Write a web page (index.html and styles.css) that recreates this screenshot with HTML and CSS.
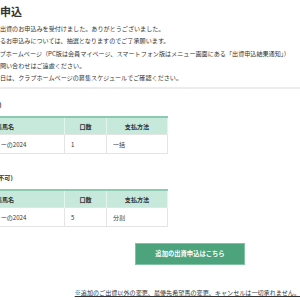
FILE: index.html
```html
<!DOCTYPE html>
<html lang="ja">

<head>
    <meta charset="UTF-8">
    <meta name="viewport" content="width=device-width, initial-scale=1.0">
    <title>出資申込</title>
    <link rel="stylesheet" href="styles.css">
</head>

<body>
    <div class="page">
        <h1 class="title">出資申込</h1>

        <div class="message">
            <p>このたびは、追加のご出資のお申込みを受付けました。ありがとうございました。</p>
            <p>今回の追加出資に対するお申込みについては、抽選となりますのでご了承願います。</p>
            <p>結果については、クラブホームページ（PC版は会員マイページ、スマートフォン版はメニュー画面にある「出資申込結果通知」）</p>
            <p>なお、抽選結果へのお問い合わせはご遠慮ください。</p>
            <p>※抽選結果通知の掲載日は、クラブホームページの募集スケジュールでご確認ください。</p>
        </div>

        <hr class="divider">

        <h2 class="label">最優先希望馬(抽選対象)</h2>
        <table class="apply-table">
            <thead>
                <tr>
                    <th class="col-name">募集馬名</th>
                    <th class="col-count">口数</th>
                    <th class="col-pay">支払方法</th>
                </tr>
            </thead>
            <tbody>
                <tr>
                    <td>サンシャインメモリーの2024</td>
                    <td>1</td>
                    <td>一括</td>
                </tr>
            </tbody>
        </table>

        <h2 class="label label-second">今回の追加出資馬(変更不可)</h2>
        <table class="apply-table">
            <thead>
                <tr>
                    <th class="col-name">募集馬名</th>
                    <th class="col-count">口数</th>
                    <th class="col-pay">支払方法</th>
                </tr>
            </thead>
            <tbody>
                <tr>
                    <td>サンシャインメモリーの2024</td>
                    <td>5</td>
                    <td>分割</td>
                </tr>
            </tbody>
        </table>

        <div class="actions">
            <a href="#" class="btn">追加の出資申込はこちら</a>
        </div>

        <p class="note"><a href="#">※追加のご出資以外の変更、最優先希望馬の変更、キャンセルは一切承れません。</a></p>
    </div>
</body>

</html>
```

FILE: styles.css
```css
body {
    margin: 0;
    overflow: hidden;
    background: #fff;
    color: #333;
    font-family: "Noto Sans CJK JP", "Noto Sans", sans-serif;
}

.page {
    margin-left: -61px;
    width: 361px;
    font-size: 6.1px;
}

.title {
    margin: 0;
    padding: 4px 0 0 39px;
    font-size: 11px;
    line-height: 14px;
    font-weight: bold;
}

.message {
    margin-top: 5px;
}

.message p {
    margin: 0;
    line-height: 12.3px;
    white-space: nowrap;
}

.divider {
    margin: 3px 0 0;
    border: 0;
    border-top: 2px solid #ececec;
}

.label {
    margin: 10px 0 5px;
    font-size: 6.1px;
    line-height: 12px;
    font-weight: bold;
    white-space: nowrap;
    text-indent: -3px;
}

.label-second {
    margin-top: 18px;
    text-indent: -4px;
}

.apply-table {
    width: 229px;
    border-collapse: collapse;
    table-layout: fixed;
}

.col-name {
    width: 124px;
}

.col-count {
    width: 41px;
}

.apply-table th {
    height: 16px;
    padding: 0;
    background: #c6e9dc;
    border-top: 2px solid #8ccbb1;
    border-left: 1px solid #e4f4ee;
    border-right: 1px solid #e4f4ee;
    font-weight: bold;
    text-align: center;
}

.apply-table td {
    height: 18px;
    padding: 0 6px;
    border: 1px solid #e4e4e4;
    white-space: nowrap;
}

.actions {
    margin-top: 16px;
}

.btn {
    display: block;
    box-sizing: border-box;
    width: 110px;
    height: 22px;
    margin-left: 196px;
    background: #4da47c;
    border: 1px solid #80c4a4;
    color: #fff;
    font-size: 6.3px;
    font-weight: bold;
    line-height: 20px;
    text-align: center;
    text-decoration: none;
}

.note {
    margin: 22px 0 0;
    line-height: 12px;
    text-align: right;
}

.note a {
    color: #333;
}
```
